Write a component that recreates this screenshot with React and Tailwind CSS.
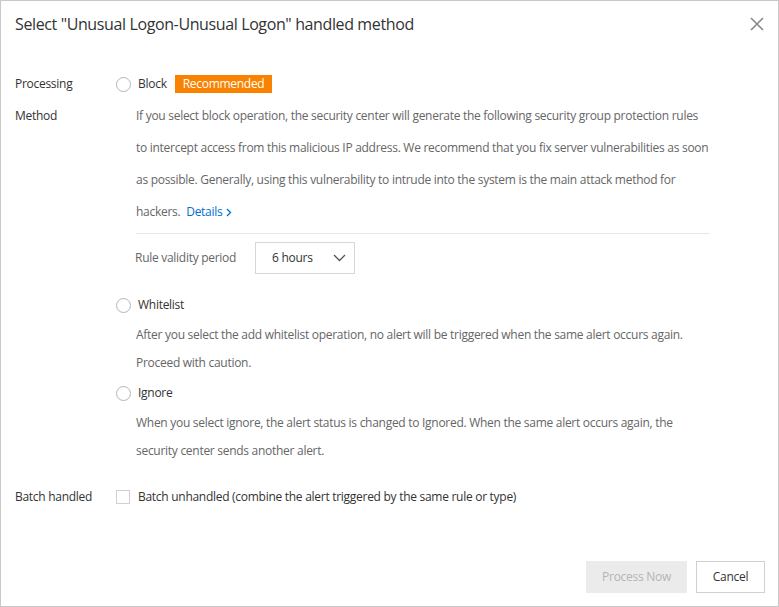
import React, { useState } from "react";

const font = { fontFamily: '"Segoe UI", "Open Sans", "Noto Sans", sans-serif' };

function Radio({ checked, onClick }) {
  return (
    <button
      type="button"
      onClick={onClick}
      className="w-[15px] h-[15px] rounded-full border border-[#b5b5b5] bg-white flex items-center justify-center shrink-0"
    >
      {checked && <span className="w-[7px] h-[7px] rounded-full bg-[#0070cc]" />}
    </button>
  );
}

function Desc({ lines, leading }) {
  return (
    <div className={`pl-[20px] text-[12px] text-[#666] ${leading}`}>
      {lines.map((l, i) => (
        <div key={i} className="whitespace-nowrap">
          {l}
        </div>
      ))}
    </div>
  );
}

export default function App() {
  const [method, setMethod] = useState(null);
  const [batch, setBatch] = useState(false);

  return (
    <div style={font} className="w-[779px] h-[607px] bg-white border border-[#c8c8c8] flex flex-col text-[#333] tracking-[-0.28px]">
      {/* Header */}
      <div className="flex items-center justify-between pl-[14px] pr-[13px] h-[46px]">
        <h1 className="text-[16px] tracking-[-0.38px]">Select "Unusual Logon-Unusual Logon" handled method</h1>
        <button className="text-[#888]">
          <svg width="16" height="16" viewBox="0 0 16 16" fill="none" stroke="currentColor" strokeWidth="1.6">
            <path d="M2 2L14 14M14 2L2 14" />
          </svg>
        </button>
      </div>

      {/* Body */}
      <div className="flex-1 pl-[14px] pt-[24px] text-[12px]">
        <div className="flex">
          <div className="w-[101px] shrink-0 leading-[26px]">
            <div>Processing</div>
            <div className="mt-[6px]">Method</div>
          </div>

          <div className="flex flex-col">
            {/* Block */}
            <div className="flex items-center h-[26px] gap-[7px]">
              <Radio checked={method === "block"} onClick={() => setMethod("block")} />
              <span className="text-[#333]">Block</span>
              <span className="ml-[1px] bg-[#f98200] text-white px-[8px] h-[18px] leading-[18px] text-[12px]">
                Recommended
              </span>
            </div>
            <div className="pl-[20px] w-[595px] mt-[3px]">
              <div className="text-[#666] leading-[32px]">
                <div className="whitespace-nowrap">
                  If you select block operation, the security center will generate the following security group protection rules
                </div>
                <div className="whitespace-nowrap">
                  to intercept access from this malicious IP address. We recommend that you fix server vulnerabilities as soon
                </div>
                <div className="whitespace-nowrap">
                  as possible. Generally, using this vulnerability to intrude into the system is the main attack method for
                </div>
                <div className="whitespace-nowrap">
                  hackers. <a className="ml-[3px] text-[#0070cc]">Details</a>
                  <svg className="inline ml-[4px] mb-[1px]" width="6" height="9" viewBox="0 0 6 9" fill="none" stroke="#0070cc" strokeWidth="1.3">
                    <path d="M1 1l3.5 3.5L1 8" />
                  </svg>
                </div>
              </div>
              <div className="border-t border-[#e6e6e6] mt-[5px] w-[574px]" />
              <div className="flex items-center h-[46px] pt-[2px] -ml-[1px]">
                <span className="text-[#666] w-[120px]">Rule validity period</span>
                <div className="flex items-center justify-between w-[100px] h-[32px] border border-[#d7d7d7] pl-[16px] pr-[8px] text-[#333]">
                  <span>6 hours</span>
                  <svg width="13" height="8" viewBox="0 0 13 8" fill="none" stroke="#555" strokeWidth="1.3">
                    <path d="M1 1l5.5 5.5L12 1" />
                  </svg>
                </div>
              </div>
            </div>

            {/* Whitelist */}
            <div className="flex items-center h-[26px] gap-[7px] mt-[12px]">
              <Radio checked={method === "whitelist"} onClick={() => setMethod("whitelist")} />
              <span>Whitelist</span>
            </div>
            <Desc
              leading="leading-[28px] mt-[3px]"
              lines={[
                "After you select the add whitelist operation, no alert will be triggered when the same alert occurs again.",
                "Proceed with caution.",
              ]}
            />

            {/* Ignore */}
            <div className="flex items-center h-[26px] gap-[7px] mt-[3px]">
              <Radio checked={method === "ignore"} onClick={() => setMethod("ignore")} />
              <span>Ignore</span>
            </div>
            <Desc
              leading="leading-[28px] mt-[3px]"
              lines={[
                "When you select ignore, the alert status is changed to Ignored. When the same alert occurs again, the",
                "security center sends another alert.",
              ]}
            />
          </div>
        </div>

        {/* Batch */}
        <div className="flex items-center h-[26px] mt-[19px]">
          <div className="w-[101px] shrink-0">Batch handled</div>
          <button
            type="button"
            onClick={() => setBatch(!batch)}
            className="w-[14px] h-[14px] border border-[#d0d0d0] bg-white shrink-0 flex items-center justify-center"
          >
            {batch && <span className="w-[8px] h-[8px] bg-[#0070cc]" />}
          </button>
          <span className="ml-[8px]">Batch unhandled (combine the alert triggered by the same rule or type)</span>
        </div>
      </div>

      {/* Footer */}
      <div className="flex justify-end gap-[9px] pr-[13px] pb-[13px] text-[12px]">
        <button disabled className="w-[101px] h-[32px] bg-[#ebebeb] text-[#b5b5b5]">
          Process Now
        </button>
        <button className="w-[69px] h-[32px] border border-[#d0d0d0] bg-white text-[#333]">Cancel</button>
      </div>
    </div>
  );
}
